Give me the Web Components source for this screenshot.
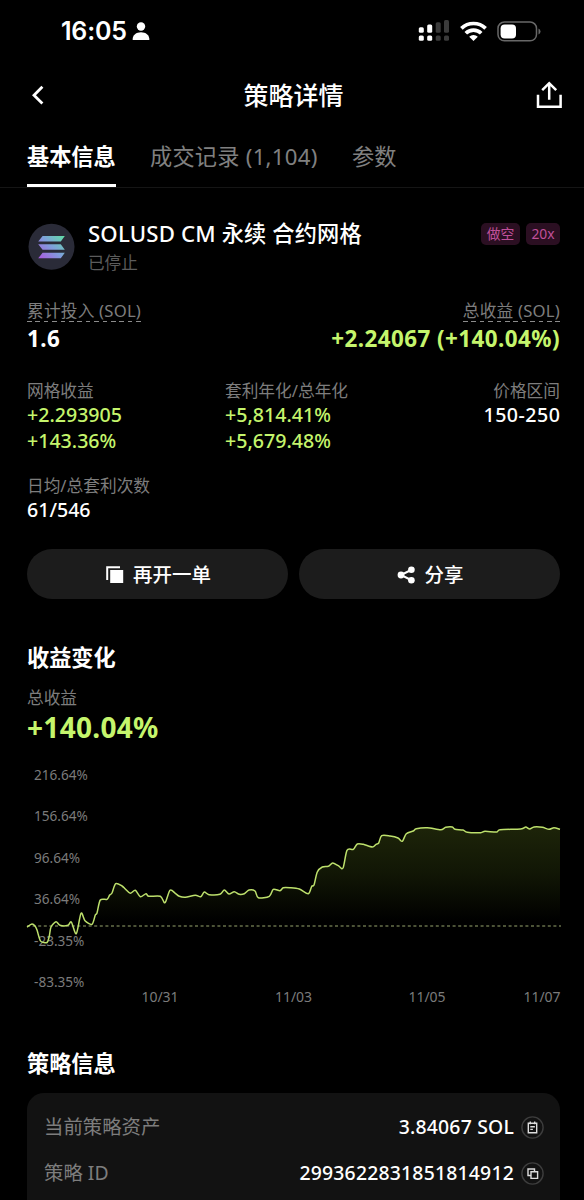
<!DOCTYPE html>
<html lang="zh-CN">
<head>
<meta charset="utf-8">
<title>策略详情</title>
<style>
    html, body {
        margin: 0;
        background: #000;
    }
    body {
        width: 584px;
        height: 1200px;
        overflow: hidden;
        color: #fff;
        font-family: "Noto Sans", "Noto Sans CJK SC", sans-serif;
        --up: #c5f56c;
        --muted: #7d7d7d;
    }
    main {
        padding: 0 24px 0 27px;
    }
    .row {
        display: flex;
        justify-content: space-between;
    }
    .actions {
        display: grid;
        grid-template-columns: 261px 261px;
        gap: 11px;
        margin-top: 26px;
    }
    .grid {
        display: grid;
        grid-template-columns: 198px 180px 155px;
        row-gap: 21px;
        margin-top: 25px;
    }
</style>
</head>
<body>
<status-bar time="16:05"></status-bar>
<nav-header>策略详情</nav-header>
<tab-bar>
    <tab-item active style="width:89px">基本信息</tab-item>
    <tab-item style="width:168px;letter-spacing:.25px">成交记录 (1,104)</tab-item>
    <tab-item>参数</tab-item>
</tab-bar>
<main>
    <strategy-head>
        SOLUSD CM 永续 合约网格
        <span slot="state">已停止</span>
        <tag-badge slot="tags" style="width:39px">做空</tag-badge>
        <tag-badge slot="tags" style="width:34px">20x</tag-badge>
    </strategy-head>

    <div class="row">
        <stat-item hint strong label="累计投入 (SOL)"><span>1.6</span></stat-item>
        <stat-item hint strong up end label="总收益 (SOL)"><span>+2.24067 (+140.04%)</span></stat-item>
    </div>

    <div class="grid">
        <stat-item up label="网格收益"><span>+2.293905</span><span>+143.36%</span></stat-item>
        <stat-item up label="套利年化/总年化"><span>+5,814.41%</span><span>+5,679.48%</span></stat-item>
        <stat-item end label="价格区间"><span style="letter-spacing:.5px;margin-right:-.5px">150-250</span></stat-item>
        <stat-item label="日均/总套利次数"><span>61/546</span></stat-item>
    </div>

    <div class="actions">
        <action-button icon="copy">再开一单</action-button>
        <action-button icon="share">分享</action-button>
    </div>

    <section-title style="margin-top:43px">收益变化</section-title>
    <stat-item big up label="总收益" style="margin-top:13px"><span>+140.04%</span></stat-item>
    <profit-chart></profit-chart>

    <section-title style="margin-top:41px">策略信息</section-title>
    <info-card>
        <info-row label="当前策略资产" icon="note">3.84067 SOL</info-row>
        <info-row label="策略 ID" icon="copy">2993622831851814912</info-row>
    </info-card>
</main>

<script>
class StatusBar extends HTMLElement {
    constructor(){
        super();
        this.attachShadow({mode:'open'})
    }
    connectedCallback(){
        this.shadowRoot.innerHTML = `
        <style>
        :host {
            display: flex;
            align-items: center;
            height: 62px;
            padding: 0 42px 0 61px;
            font: 600 25px/30px Inter, sans-serif;
        }
        .time { width: 66px; letter-spacing: -.2px; white-space: nowrap; }
        .user { margin: 0 auto 0 5px; }
        svg { display: block; }
        .wifi { margin: 0 10px; }
        </style>
        <span class="time">${this.getAttribute('time')}</span>
        <svg class="user" width="18" height="20" fill="#fff"><circle cx="9" cy="5.5" r="4.2"/><path d="M.6 18.8C.6 14 4.3 11.3 9 11.3s8.4 2.7 8.4 7.5q0 .3-.5.3H1.1q-.5 0-.5-.3z"/></svg>
        <svg width="32" height="22" fill="#fff">
            <rect x=".8" y="7.2" width="5" height="5.6" rx="1.5"/><rect x="9.2" y="4.6" width="5" height="8.2" rx="1.5"/>
            <rect x=".8" y="15.6" width="5" height="5.2" rx="1.5"/><rect x="9.2" y="15.6" width="5" height="5.2" rx="1.5"/>
            <g fill="#3b3b3b"><rect x="17.7" y="2.2" width="5" height="10.6" rx="1.5"/><rect x="26" y="0" width="5" height="12.8" rx="1.5"/>
            <rect x="17.7" y="15.6" width="5" height="5.2" rx="1.5"/><rect x="26" y="15.6" width="5" height="5.2" rx="1.5"/></g>
        </svg>
        <svg class="wifi" width="27" height="20" fill="none" stroke="#fff" stroke-width="3.7">
            <path d="M1.4 7.4a17.4 17.4 0 0 1 24.2 0M5.8 12.3a10.9 10.9 0 0 1 15.4 0"/>
            <path d="M9.2 15.8a6.2 6.2 0 0 1 8.6 0l-4.3 4.1z" fill="#fff" stroke="none"/>
        </svg>
        <svg width="45" height="21">
            <rect x="1" y="1" width="38.5" height="18.8" rx="6.4" fill="none" stroke="#686868" stroke-width="1.5"/>
            <rect x="3.6" y="3.4" width="15.4" height="14" rx="4" fill="#fff"/>
            <path d="M41.5 7.5q2 .8 2 3t-2 3z" fill="#686868"/>
        </svg>
        `
    }
}
customElements.define("status-bar", StatusBar)

class NavHeader extends HTMLElement {
    constructor(){
        super();
        this.attachShadow({mode:'open'})
    }
    connectedCallback(){
        this.shadowRoot.innerHTML = `
        <style>
        :host {
            display: grid;
            grid-template-columns: 60px 1fr 60px;
            align-items: center;
            height: 66px;
            font-size: 25px;
            line-height: 36px;
            font-weight: 500;
            text-align: center;
        }
        svg { display: block; fill: none; stroke: #fff; }
        .title { padding-left: 3px; }
        </style>
        <svg width="60" height="24" stroke-width="2.8"><path d="M42.4 3.8L34 12.2l8.4 8.4"/></svg>
        <span class="title"><slot></slot></span>
        <svg width="60" height="30" stroke-width="2.5"><path d="M14 14.8v12h22.6v-12M25.2 19.8V3.4M18.2 10.2l7-7 7 7"/></svg>
        `
    }
}
customElements.define("nav-header", NavHeader)

class TabBar extends HTMLElement {
    constructor(){
        super();
        this.attachShadow({mode:'open'})
    }
    connectedCallback(){
        this.shadowRoot.innerHTML = `
        <style>
        :host {
            display: flex;
            gap: 34px;
            box-sizing: border-box;
            height: 60px;
            padding: 0 27px;
            border-bottom: 1px solid #151515;
        }
        </style>
        <slot></slot>
        `
    }
}
customElements.define("tab-bar", TabBar)

class TabItem extends HTMLElement {
    constructor(){
        super();
        this.attachShadow({mode:'open'})
    }
    connectedCallback(){
        this.shadowRoot.innerHTML = `
        <style>
        :host {
            display: block;
            box-sizing: border-box;
            height: 59px;
            padding-top: 13px;
            font-size: 22.2px;
            line-height: 32px;
            color: #808080;
            white-space: nowrap;
        }
        :host([active]) {
            color: #fff;
            font-weight: 700;
            border-bottom: 3px solid #fff;
        }
        </style>
        <slot></slot>
        `
    }
}
customElements.define("tab-item", TabItem)

class TagBadge extends HTMLElement {
    constructor(){
        super();
        this.attachShadow({mode:'open'})
    }
    connectedCallback(){
        this.shadowRoot.innerHTML = `
        <style>
        :host {
            display: block;
            height: 22px;
            border-radius: 5px;
            background: #2b0f22;
            color: #c0509a;
            font-size: 13.8px;
            line-height: 22px;
            text-align: center;
        }
        </style>
        <slot></slot>
        `
    }
}
customElements.define("tag-badge", TagBadge)

class StrategyHead extends HTMLElement {
    constructor(){
        super();
        this.attachShadow({mode:'open'})
    }
    connectedCallback(){
        this.shadowRoot.innerHTML = `
        <style>
        :host {
            display: flex;
            align-items: flex-start;
            height: 112px;
            padding-top: 30px;
            box-sizing: border-box;
        }
        svg { margin: 5px 13px 0 1px; flex: none; }
        .text { flex: 1; }
        .name { font-size: 22.2px; line-height: 32px; font-weight: 500; letter-spacing: .17px; white-space: nowrap; }
        .state { font-size: 16.6px; line-height: 26px; color: #5c5c5c; }
        .tags { display: flex; gap: 6px; margin-top: 5px; }
        </style>
        <svg width="47" height="47">
            <defs>
                <linearGradient id="g" gradientUnits="userSpaceOnUse" x1="12" y1="36" x2="36" y2="12">
                    <stop offset="0" stop-color="#a95be0"/><stop offset=".5" stop-color="#7f9fdc"/><stop offset="1" stop-color="#5fe0a4"/>
                </linearGradient>
            </defs>
            <circle cx="23.5" cy="23.8" r="23" fill="#2a2b38"/>
            <path fill="url(#g)" d="M14.6 13h22.2l-4 5.6H10.2zM10.2 21.2h22.6l4 5.5H14.6zM14.6 29.8h22.2l-4 5.5H10.2z"/>
        </svg>
        <div class="text">
            <div class="name"><slot></slot></div>
            <div class="state"><slot name="state"></slot></div>
        </div>
        <div class="tags"><slot name="tags"></slot></div>
        `
    }
}
customElements.define("strategy-head", StrategyHead)

class StatItem extends HTMLElement {
    constructor(){
        super();
        this.attachShadow({mode:'open'})
    }
    connectedCallback(){
        this.shadowRoot.innerHTML = `
        <style>
        :host {
            display: flex;
            flex-direction: column;
            align-items: flex-start;
            white-space: nowrap;
        }
        :host([end]) { align-items: flex-end; }
        .label {
            height: 22px;
            font-size: 16.7px;
            line-height: 22px;
            color: var(--muted);
        }
        :host([hint]) .label {
            background: repeating-linear-gradient(90deg, #8c8c8c 0 4.6px, transparent 4.6px 8.4px) 0 100% / 100% 1.5px no-repeat;
            height: 23px;
            letter-spacing: .2px;
        }
        ::slotted(span) {
            font-size: 19.6px;
            line-height: 26px;
            font-weight: 500;
        }
        :host([strong]) ::slotted(span) {
            font-size: 22.4px;
            line-height: 33px;
            font-weight: 700;
            letter-spacing: .45px;
        }
        :host([big]) ::slotted(span) {
            font-size: 28px;
            line-height: 36px;
            font-weight: 700;
            letter-spacing: .3px;
        }
        :host([up]) ::slotted(span) { color: var(--up); }
        :host([strong]) { height: 55px; }
        </style>
        <span class="label">${this.getAttribute('label')}</span>
        <slot></slot>
        `
    }
}
customElements.define("stat-item", StatItem)

class ActionButton extends HTMLElement {
    constructor(){
        super();
        this.attachShadow({mode:'open'})
    }
    get glyph(){
        if (this.getAttribute('icon') == 'copy') {
            return `<path d="M14 1.2H1.2V14" fill="none" stroke="#fff" stroke-width="2"/><rect x="4.2" y="4" width="13" height="13" fill="#fff"/>`
        }
        return `<path d="M14 4L4 9l10 5" fill="none" stroke="#fff" stroke-width="2"/><g fill="#fff"><circle cx="4" cy="9" r="3.4"/><circle cx="14.4" cy="3.8" r="3.3"/><circle cx="14.4" cy="14.2" r="3.3"/></g>`
    }
    connectedCallback(){
        this.shadowRoot.innerHTML = `
        <style>
        :host {
            display: flex;
            align-items: center;
            justify-content: center;
            gap: 9px;
            box-sizing: border-box;
            height: 50px;
            padding: 1px 0 0 2px;
            border-radius: 25px;
            background: #1c1c1c;
            font-size: 19.5px;
            line-height: 28px;
            font-weight: 500;
        }
        </style>
        <svg width="18" height="18">${this.glyph}</svg>
        <span><slot></slot></span>
        `
    }
}
customElements.define("action-button", ActionButton)

class SectionTitle extends HTMLElement {
    constructor(){
        super();
        this.attachShadow({mode:'open'})
    }
    connectedCallback(){
        this.shadowRoot.innerHTML = `
        <style>
        :host {
            display: block;
            font-size: 22.2px;
            line-height: 32px;
            font-weight: 700;
        }
        </style>
        <slot></slot>
        `
    }
}
customElements.define("section-title", SectionTitle)

// plot space: x 0..534, y 0..242
const POINTS = [
    [0,162],[5,159],[8,161],[10,165],[12,172],[14,176.5],[20,177.5],[22.3,171],[24,162],[29,156.7],[33,160.3],[41,160.3],[44.3,157],
    [49.3,168.7],[54,148.3],[58,155.7],[65,159.3],[68.3,150],[70,148],[73.3,135],[80,134.3],[82.7,130],[85,128],[88.7,118.7],
    [95,121],[98.3,124],[103.3,128.3],[108.3,125.3],[113.3,131.7],[119,128.7],[121.7,131.3],[133.3,131.3],[138,137.7],[143,125.3],
    [148.3,128.3],[152.3,131.3],[158.3,132.3],[168.3,130.3],[173.7,131.7],[177.3,127],[182,129.7],[193,129.3],[197.3,125],
    [202,129],[207.3,126.7],[212.3,129.3],[217.3,128.7],[222,125],[228,126],[231.3,132.7],[242.3,131.3],[246.3,124.3],
    [253,125.7],[256.3,122.7],[263,122.7],[272.3,124],[281.3,128.7],[284.7,121.3],[287,120],[290.3,107],[295.3,102],
    [301.3,101.3],[305.7,98],[311.3,100.7],[316,103],[320,85.3],[326.3,84.3],[330.3,79],[336.3,79.3],[345.3,82],[349,79.3],
    [351.7,78],[354.7,70.7],[363,71],[371,73],[375.3,76.3],[379.3,68.7],[386.3,66],[389.3,63.7],[400.3,62.7],[413.7,64.7],
    [418.7,62.3],[425.3,62],[428,64.3],[436,65],[440.3,67.3],[453.7,67.7],[458,66.3],[469.7,67],[473,64.7],[493.7,64],
    [498.7,62],[502.7,64],[507,62],[515.3,62.3],[522,64.3],[527,62.7],[533,64.3]
]

class ProfitChart extends HTMLElement {
    constructor(){
        super();
        this.attachShadow({mode:'open'})
    }
    // smooth path through the points
    line(){
        const p = POINTS
        let d = `M${p[0]}`
        for (let i = 0; i < p.length - 1; i++) {
            const a = p[i], b = p[i + 1]
            const z = p[i - 1] || a, c = p[i + 2] || b
            d += `C${a[0] + (b[0] - z[0]) / 7} ${a[1] + (b[1] - z[1]) / 7} ${b[0] - (c[0] - a[0]) / 7} ${b[1] - (c[1] - a[1]) / 7} ${b}`
        }
        return d
    }
    connectedCallback(){
        const d = this.line()
        const ys = ['216.64%', '156.64%', '96.64%', '36.64%', '-23.35%', '-83.35%']
        const xs = [['10/31', 133], ['11/03', 266.5], ['11/05', 400], ['11/07', 515]]
        this.shadowRoot.innerHTML = `
        <style>
        :host {
            display: block;
            height: 242px;
            margin-top: 20px;
        }
        svg { display: block; overflow: visible; }
        text {
            font-size: 14px;
            fill: #7b7b7b;
        }
        .y { font-size: 13.6px; }
        </style>
        <svg width="534" height="242">
            <defs>
                <linearGradient id="fill" gradientUnits="userSpaceOnUse" x1="0" y1="62" x2="0" y2="156">
                    <stop offset="0" stop-color="#1d2409"/><stop offset=".5" stop-color="#111605"/><stop offset="1" stop-color="#000"/>
                </linearGradient>
            </defs>
            <path d="${d}V156H0z" fill="url(#fill)"/>
            ${ys.map((t, i) => `<text class="y" x="7" y="${15 + i * 41.4}">${t}</text>`).join('')}
            ${xs.map(([t, x]) => `<text x="${x}" y="237" text-anchor="middle">${t}</text>`).join('')}
            <path d="M0 161H534" stroke="#98a56e" stroke-width="1.2" stroke-dasharray="3 2.6"/>
            <path d="${d}" fill="none" stroke="#bde06c" stroke-width="1.5"/>
        </svg>
        `
    }
}
customElements.define("profit-chart", ProfitChart)

class InfoCard extends HTMLElement {
    constructor(){
        super();
        this.attachShadow({mode:'open'})
    }
    connectedCallback(){
        this.shadowRoot.innerHTML = `
        <style>
        :host {
            display: block;
            height: 140px;
            margin-top: 13px;
            padding: 11px 16px 0 17px;
            border-radius: 17px;
            background: #121212;
        }
        </style>
        <slot></slot>
        `
    }
}
customElements.define("info-card", InfoCard)

class InfoRow extends HTMLElement {
    constructor(){
        super();
        this.attachShadow({mode:'open'})
    }
    get glyph(){
        if (this.getAttribute('icon') == 'copy') {
            return `<path d="M9.5 13.5h-2.5v-6.5h6.5v2.5M10 9.8h6.6v6.6H10z"/>`
        }
        return `<path d="M7.3 7.2h8.4v9.6H7.3zM9.3 5.6v2.6M13.7 5.6v2.6M9.3 10.7h4.6M9.3 13.4h2.6"/>`
    }
    connectedCallback(){
        this.shadowRoot.innerHTML = `
        <style>
        :host {
            display: flex;
            align-items: center;
            height: 46px;
            font-size: 19.4px;
            line-height: 28px;
            font-weight: 500;
        }
        .label {
            flex: 1;
            color: var(--muted);
            font-weight: 400;
        }
        .value { letter-spacing: .2px; }
        svg { margin-left: 7px; fill: none; stroke: #ddd; stroke-width: 1.4; }
        </style>
        <span class="label">${this.getAttribute('label')}</span>
        <span class="value"><slot></slot></span>
        <svg width="23" height="23"><circle cx="11.5" cy="11.5" r="10.6" stroke="#3d3d3d"/>${this.glyph}</svg>
        `
    }
}
customElements.define("info-row", InfoRow)
</script>
</body>
</html>
